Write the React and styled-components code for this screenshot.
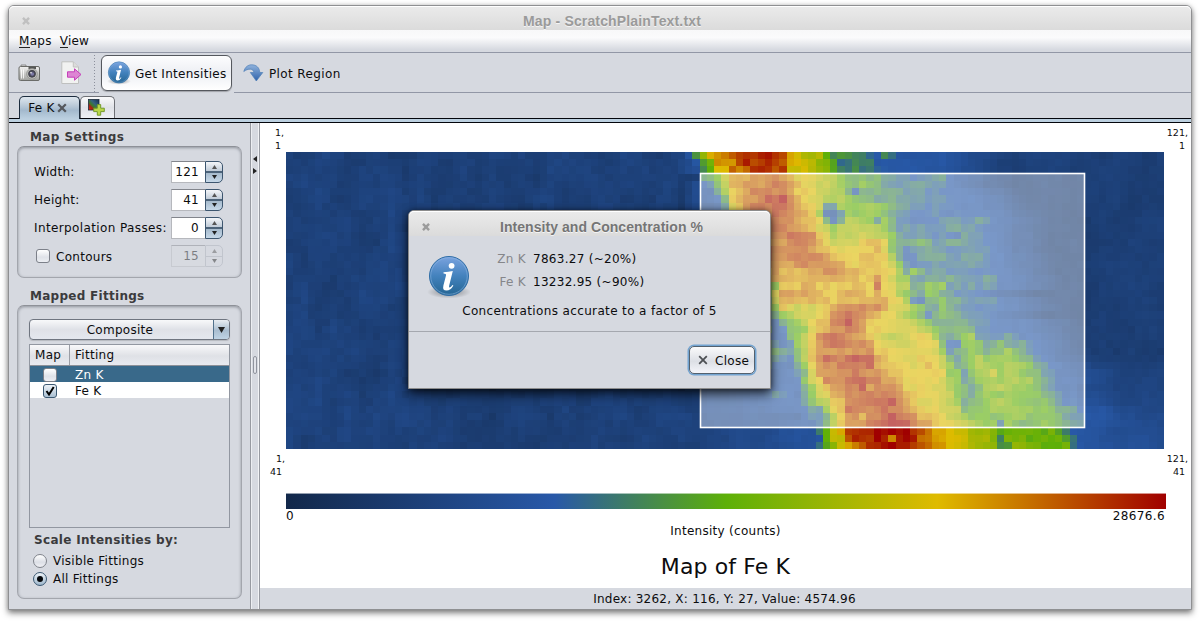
import React from "react";
import styled, { createGlobalStyle, css } from "styled-components";

const GlobalStyle = createGlobalStyle`
  * { box-sizing: border-box; }
  html, body { margin: 0; background: #fff; }
  body { overflow: hidden; font-family: "DejaVu Sans", sans-serif; font-size: 12px; color: #000; }
`;

const Page = styled.div`
  width: 1200px;
  height: 621px;
  padding: 5px 8px 11px;
  overflow: hidden;
`;

const Window = styled.div`
  position: relative;
  display: flex;
  flex-direction: column;
  width: 1184px;
  height: 605px;
  border: 1px solid #8f9092;
  border-radius: 6px 6px 0 0;
  background: #d6d9e0;
  box-shadow: 0 3px 6px rgba(0, 0, 0, 0.5), 0 0 4px rgba(0, 0, 0, 0.15);
`;

const Label = styled.span`
  display: block;
  white-space: pre;
  font-size: ${(p) => p.$size || 12}px;
  line-height: ${(p) => p.$lh || 16}px;
  letter-spacing: ${(p) => (p.$track === undefined ? 0.28 : p.$track)}px;
  padding-top: ${(p) => p.$drop || 0}px;
  color: ${(p) => p.$color || "#0c0c0e"};
  font-weight: ${(p) => (p.$bold ? 700 : 400)};
`;

const TitleBar = styled.div`
  display: grid;
  grid-template-columns: 34px 1fr 10px;
  align-items: center;
  flex: none;
  height: ${(p) => p.$h}px;
  padding-top: 6px;
  border-radius: 5px 5px 0 0;
  background: linear-gradient(#ebebeb, #dbdbdb);
  box-shadow: inset 0 1px 0 #fff;
  svg { justify-self: center; }
`;

const TitleText = styled.div`
  text-align: center;
  font-family: "Liberation Sans", sans-serif;
  font-weight: 700;
  font-size: ${(p) => p.$size}px;
  line-height: 16px;
  color: ${(p) => p.$color};
  text-shadow: 0 1px 0 rgba(255, 255, 255, 0.7);
  white-space: pre;
  letter-spacing: ${(p) => p.$track || 0}px;
`;

const MenuBar = styled.div`
  display: flex;
  gap: 8px;
  flex: none;
  height: 23px;
  padding: 3px 10px 0;
  border-bottom: 1px solid #9297a6;
  background: linear-gradient(#f8f8f9 0%, #fbfbfc 35%, #d6d9e0 90%);
  u { text-decoration: none; border-bottom: 1px solid #222; display: inline-block; height: 15px; }
`;

const Toolbar = styled.div`
  display: flex;
  flex: none;
  align-items: center;
  height: 40px;
  background: linear-gradient(#9297a6, #9297a6) 0 39px / 90px 1px no-repeat,
    linear-gradient(#9297a6, #9297a6) 225px 39px / 960px 1px no-repeat;
`;

const ToolIcon = styled.div`
  display: flex;
  flex: none;
  align-items: center;
  justify-content: center;
  width: ${(p) => p.$w}px;
`;

const ToolSeparator = styled.div`
  width: 1px;
  height: 37px;
  margin-right: 6px;
  background: repeating-linear-gradient(#8c909c 0 1px, transparent 1px 3px);
`;

const ToolButton = styled.div`
  display: flex;
  align-items: center;
  width: ${(p) => p.$w}px;
  height: 36px;
  padding-left: 5px;
  gap: 4px;
  ${(p) =>
    p.$active &&
    css`
      border: 1px solid #55585e;
      border-radius: 6px;
      background: linear-gradient(#fdfdfe, #edeff4 50%, #fff);
      box-shadow: 0 1px 1px rgba(0, 0, 0, 0.25);
    `}
`;

const TabStrip = styled.div`
  display: flex;
  align-items: flex-end;
  flex: none;
  height: 30px;
  padding: 3px 10px 0;
  background: linear-gradient(#04060c, #04060c) 0 25px / 100% 1px no-repeat,
    linear-gradient(#bcd0e0, #bcd0e0) 0 26px / 100% 3px no-repeat,
    linear-gradient(#04060c, #04060c) 0 29px / 100% 1px no-repeat;
`;

const Tab = styled.div`
  display: flex;
  align-items: center;
  justify-content: center;
  gap: 2px;
  width: ${(p) => p.$w}px;
  padding-right: ${(p) => (p.$selected ? 4 : 2)}px;
  height: ${(p) => (p.$selected ? 23 : 22)}px;
  margin-bottom: ${(p) => (p.$selected ? 4 : 5)}px;
  border: 1px solid ${(p) => (p.$selected ? "#1c2c3e" : "#6e7076")};
  border-bottom: 0;
  border-radius: 5px 5px 0 0;
  background: ${(p) =>
    p.$selected
      ? "linear-gradient(#dfe7ee, #b4c5d5 45%, #a3b9cd 60%, #bcd0e0)"
      : "linear-gradient(#fafafb, #e0e2e8 50%, #eef0f5)"};
`;

const Body = styled.div`
  display: flex;
  flex: 1;
  min-height: 0;
`;

const Sidebar = styled.div`
  width: 241px;
  padding: 5px 8px 0;
`;

const SectionTitle = styled.div`
  height: ${(p) => p.$h}px;
  padding: 1px 0 0 13px;
`;

const GroupBox = styled.div`
  height: ${(p) => p.$h}px;
  padding: ${(p) => p.$pad};
  border: 1px solid #a3a6ad;
  border-top-color: #8e9198;
  border-radius: 7px;
  box-shadow: inset 0 1px 3px rgba(40, 44, 54, 0.4);
`;

const SettingRow = styled.div`
  display: flex;
  align-items: center;
  justify-content: space-between;
  height: 22px;
  margin-bottom: 6px;
`;

const SpinBox = styled.div`
  display: flex;
  flex: none;
  width: 52px;
  height: 22px;
  opacity: ${(p) => (p.$disabled ? 0.45 : 1)};
`;

const SpinValue = styled.div`
  width: 34px;
  padding: 2px 6px 0 0;
  display: flex;
  justify-content: flex-end;
  border: 1px solid #b6b8bd;
  border-top-color: #82858c;
  border-right: 0;
  background: ${(p) => (p.$disabled ? "#d9dce2" : "#fff")};
`;

const SpinButtons = styled.div`
  display: grid;
  grid-template-rows: 1fr 1fr;
  justify-items: center;
  align-items: center;
  width: 18px;
  border: 1px solid ${(p) => (p.$disabled ? "#a8adb8" : "#3d566f")};
  border-radius: 0 5px 5px 0;
  background: ${(p) =>
    p.$disabled
      ? "linear-gradient(#d6d9e0 49%, #a8adb8 49% 53%, #d6d9e0 53%)"
      : "linear-gradient(#f4f6f9, #bdc9d6 47%, #4c6379 47% 53%, #a5b9cb 53%, #c6d8e8)"};
`;

const Check = styled.div`
  display: flex;
  align-items: center;
  justify-content: center;
  width: 14px;
  height: 14px;
  border: 1px solid ${(p) => (p.$on ? "#3b5872" : "#7c8089")};
  border-radius: 3px;
  background: ${(p) => (p.$on ? "linear-gradient(#eef3f8, #a9bfd2)" : "linear-gradient(#fff, #dfe2e8 60%, #eceef3)")};
`;

const Inline = styled.div`
  display: flex;
  align-items: center;
  gap: ${(p) => p.$gap}px;
  padding-left: ${(p) => p.$left || 0}px;
  height: ${(p) => p.$h || 22}px;
`;

const Combo = styled.div`
  display: flex;
  height: 21px;
  border: 1px solid #6f7580;
  border-radius: 4px;
  overflow: hidden;
  background: linear-gradient(#f8f9fa, #dfe1e7 50%, #e4e7ee);
  box-shadow: 0 1px 1px rgba(0, 0, 0, 0.15);
`;

const ComboText = styled.div`
  flex: 1;
  display: flex;
  justify-content: center;
  padding: 2px 3px 0 0;
`;

const ComboArrow = styled.div`
  display: flex;
  align-items: center;
  justify-content: center;
  width: 16px;
  border-left: 1px solid #50708c;
  background: linear-gradient(#e8edf2, #a9bdd0 55%, #bfd3e4);
`;

const Table = styled.div`
  height: 184px;
  margin-top: 4px;
  border: 1px solid #9297a1;
`;

const TableHead = styled.div`
  display: grid;
  grid-template-columns: 39px 1fr;
  height: 21px;
  border-bottom: 1px solid #8d9098;
  background: linear-gradient(#f8f8fa, #dfe1e6 55%, #e8eaf0);
  > * { padding: 2px 0 0 5px; }
  > * + * { border-left: 1px solid #9a9da5; }
`;

const TableRow = styled.div`
  display: grid;
  grid-template-columns: 39px 1fr;
  align-items: center;
  height: 16px;
  background: ${(p) => (p.$selected ? "#39698a" : "#fff")};
  > :first-child { justify-self: center; }
  > :last-child { padding-left: 6px; }
`;

const Radio = styled.div`
  display: flex;
  align-items: center;
  justify-content: center;
  width: 14px;
  height: 14px;
  border: 1px solid ${(p) => (p.$on ? "#3b5872" : "#80848c")};
  border-radius: 50%;
  background: ${(p) => (p.$on ? "linear-gradient(#eef3f8, #9fb8cd)" : "linear-gradient(#fff, #dcdfe6 60%, #f0f1f5)")};
  &::after {
    content: "";
    width: 6px;
    height: 6px;
    border-radius: 50%;
    background: ${(p) => (p.$on ? "#05070a" : "transparent")};
  }
`;

const Divider = styled.div`
  display: flex;
  flex-direction: column;
  align-items: center;
  gap: 6px;
  width: 10px;
  border: 1px solid #979aa1;
  border-width: 0 1px;
  box-shadow: inset 1px 0 0 #eceef2, inset -1px 0 0 #f2f3f6;
  padding-top: 33px;
`;

const Grip = styled.div`
  width: 4px;
  height: 18px;
  margin-top: 176px;
  border: 1px solid #90949e;
  border-radius: 2px;
  background: #e2e4ea;
`;

const MapPane = styled.div`
  display: flex;
  flex-direction: column;
  flex: 1;
  background: #fff;
`;

const CornerRow = styled.div`
  display: flex;
  justify-content: space-between;
  height: ${(p) => p.$h}px;
  padding: ${(p) => p.$top}px 3px 0 10px;
`;

const Corner = styled.div`
  display: flex;
  flex-direction: column;
  align-items: flex-end;
  min-width: 14px;
  > :last-child { padding-right: 3px; }
`;

const Heatmap = styled.svg`
  display: block;
  flex: none;
  width: 878px;
  height: 297px;
  margin-left: 26px;
`;

const ScaleBar = styled.div`
  width: 880px;
  height: 16px;
  flex: none;
  margin-left: 26px;
  border-top: 1px solid rgba(255, 255, 255, 0.55);
  background: linear-gradient(90deg, #12284a, #2858a8 30.5%, #5db008 50%, #dfbb00 74%, #a00000) border-box;
`;

const ScaleEnds = styled.div`
  display: flex;
  justify-content: space-between;
  width: 879px;
  height: 14px;
  margin-left: 26px;
`;

const Centered = styled.div`
  display: flex;
  justify-content: center;
  height: ${(p) => p.$h}px;
`;

const Status = styled.div`
  display: flex;
  justify-content: center;
  flex: 1;
  padding: 3px 2px 0 0;
  background: #d6d9e0;
`;

const Dialog = styled.div`
  position: absolute;
  left: 399px;
  top: 204px;
  display: flex;
  flex-direction: column;
  width: 363px;
  height: 179px;
  border: 1px solid #8c8c8c;
  border-radius: 6px 6px 0 0;
  background: #d6d9e0;
  box-shadow: 0 5px 12px rgba(0, 0, 0, 0.75), 0 0 5px rgba(0, 0, 0, 0.4);
`;

const DialogBody = styled.div`
  display: grid;
  grid-template-columns: 79px 1fr;
  height: 67px;
  padding-top: 15px;
`;

const DialogIcon = styled.div`
  padding: 4px 0 0 18px;
`;

const Readings = styled.div`
  display: grid;
  grid-template-columns: 38px 1fr;
  grid-auto-rows: 23px;
  column-gap: 7px;
  > :nth-child(odd) { justify-self: end; }
`;

const DialogFooter = styled.div`
  display: flex;
  justify-content: flex-end;
  flex: 1;
  padding: 14px 15px 0 0;
  border-top: 1px solid #a5a8af;
`;

const CloseButton = styled.div`
  display: flex;
  align-items: center;
  gap: 7px;
  width: 66px;
  height: 28px;
  padding-left: 8px;
  border: 1px solid #53616f;
  border-radius: 5px;
  background: linear-gradient(#fafafb, #dcdfe5 55%, #f4f5fa);
  box-shadow: 0 0 0 1.5px #73a4d1;
`;

/* Map data: one line per row, "column:level" knots on a 0-100 intensity scale. */
const KNOTS = [
  "55:26 56:40 57:62 58:78 60:80 61:87 62:87 63:93 64:88 65:93 67:93 68:85 69:74 71:67 73:64 74:50 75:42 76:47 77:40 79:40 80:35 81:30 82:42 83:35 84:28 90:28",
  "54:18 55:20 56:28 57:42 58:57 59:79 61:80 62:88 63:97 64:87 65:93 67:92 68:83 69:76 70:72 72:67 73:58 74:55 75:46 76:33 77:35 78:42 80:36 81:30 90:28",
  "54:18 56:24 57:38 58:50 59:72 60:77 61:84 62:80 63:87 64:91 65:93 66:93 67:84 68:88 69:72 71:71 72:66 74:60 75:50 76:36 78:40 80:36 82:30 90:27",
  "54:12 56:14 57:38 58:44 59:52 60:65 61:79 62:82 63:79 65:85 67:90 69:80 70:72 72:70 74:64 76:56 77:46 79:48 81:43 82:38 86:33 90:36 91:30 92:27",
  "54:12 57:28 58:33 59:46 60:63 61:78 63:82 65:85 67:90 68:88 70:78 71:73 73:67 74:66 75:62 76:50 78:44 79:50 81:42 84:33 89:36 91:28",
  "54:12 57:25 58:26 59:36 60:55 61:74 62:80 64:87 66:92 68:85 69:80 71:75 73:65 75:60 76:54 77:42 78:28 79:45 80:38 82:42 84:36 90:32 93:28",
  "54:12 57:24 59:30 60:45 61:73 62:80 64:86 66:93 68:97 69:86 71:74 73:70 75:55 76:64 77:50 78:44 80:40 84:37 88:35 91:30 94:28",
  "54:12 57:22 59:24 60:35 61:68 62:78 64:88 66:92 69:90 71:78 73:68 74:37 75:36 76:58 78:48 80:58 82:52 83:42 85:34 90:33 95:28",
  "54:14 58:20 61:60 63:80 66:90 69:90 71:80 72:76 73:60 74:24 75:24 76:37 77:52 79:50 80:57 82:45 84:34 86:30 88:34 91:30 96:28",
  "54:14 59:20 62:60 64:84 66:91 69:88 71:80 73:72 74:40 75:27 76:38 77:62 79:58 80:50 81:40 82:55 84:35 86:30 91:33 95:36 97:28",
  "54:14 60:20 63:60 65:84 68:90 70:86 72:78 73:70 74:66 75:55 77:66 79:62 81:60 82:55 83:45 84:36 86:30 87:35 93:36 97:28",
  "54:14 60:20 63:60 66:88 68:88 70:94 72:85 73:76 74:70 75:58 76:62 78:66 80:64 82:58 83:48 84:36 88:33 92:28 93:38 97:28",
  "54:14 60:20 63:60 66:80 69:87 70:93 72:85 73:78 74:72 75:62 78:66 79:74 81:78 82:70 83:48 84:38 88:44 89:34 93:40 97:28",
  "54:14 60:20 63:60 66:92 68:87 70:90 72:84 73:80 75:72 77:70 79:76 81:78 82:72 83:50 84:38 85:28 86:36 88:42 90:33 94:35 97:28",
  "54:14 60:20 63:60 66:93 68:85 70:90 72:88 74:83 76:76 78:77 80:76 82:76 83:58 84:42 85:28 87:34 89:40 91:34 95:36 98:28",
  "54:14 60:20 63:60 66:85 68:82 70:87 72:88 74:82 75:86 77:74 80:77 82:75 83:68 84:48 85:35 86:28 88:34 92:35 95:36 98:28",
  "54:14 60:20 64:60 66:82 69:78 72:82 74:86 76:82 78:80 80:75 82:75 83:70 84:55 85:38 86:52 88:36 93:34 98:28",
  "54:14 60:20 64:60 66:80 70:80 74:82 77:79 79:76 81:82 82:75 83:68 84:55 85:56 86:40 87:35 89:42 92:36 96:36 99:28",
  "54:14 63:28 66:50 67:52 68:76 71:80 75:76 78:78 80:76 81:90 82:74 83:70 84:58 85:62 86:40 88:50 90:50 91:36 97:34 99:27",
  "54:14 63:28 65:40 66:55 67:68 68:80 69:82 71:85 73:82 74:78 75:75 76:80 79:82 80:78 81:82 82:76 83:72 84:58 85:48 86:42 87:38 88:50 90:42 92:33 95:28",
  "54:14 63:28 66:45 67:68 68:80 73:80 75:76 78:79 82:80 83:76 84:70 85:55 86:35 87:28 88:42 90:46 92:38 94:30 97:36 98:28",
  "54:14 63:28 66:42 67:55 68:75 69:72 70:66 73:70 74:76 76:84 79:88 82:84 83:72 85:66 86:56 87:45 88:38 89:36 90:48 92:36 94:30 97:34 99:28",
  "54:14 63:28 66:36 67:38 68:52 69:60 71:66 73:70 74:74 75:84 77:96 79:88 80:84 81:78 82:73 84:68 85:58 86:52 87:42 88:33 90:50 91:42 93:33 97:28",
  "57:20 63:28 66:34 67:28 68:38 69:50 71:62 72:75 74:78 75:87 77:96 79:82 80:78 82:72 84:70 86:65 88:50 89:38 90:42 92:40 94:35 97:28 101:28",
  "57:20 63:28 66:40 67:28 68:30 69:45 71:50 72:72 73:78 75:87 77:90 79:82 80:76 83:72 86:70 87:64 88:56 89:46 91:42 93:44 95:35 97:28 101:28",
  "57:20 63:28 66:32 67:28 68:30 69:45 70:52 71:60 72:76 73:87 75:92 77:87 80:78 82:68 83:63 85:70 87:72 88:70 89:55 90:42 91:35 93:54 94:54 95:35 97:33 99:35 102:28",
  "57:20 63:28 66:36 68:28 69:36 70:50 71:62 72:76 73:85 75:90 77:92 80:84 82:70 84:66 86:70 88:74 89:68 90:46 91:28 92:28 93:50 95:48 96:40 98:45 99:36 100:38 101:40 102:30",
  "57:20 66:36 67:40 69:36 70:48 71:60 72:74 73:86 75:84 78:84 80:86 81:78 83:72 86:68 88:74 89:70 90:52 91:33 92:38 94:52 95:50 96:42 98:44 99:54 100:48 101:38 103:28",
  "57:20 66:38 69:28 70:42 71:60 72:76 74:92 76:90 78:94 80:92 82:80 84:72 86:70 88:76 90:66 91:44 92:38 93:48 95:58 96:50 99:55 101:45 103:35 104:28",
  "57:20 66:34 69:26 70:36 71:50 72:75 74:84 76:92 78:88 80:94 81:82 83:76 85:72 87:70 88:78 89:74 90:66 91:55 92:40 93:42 95:60 97:52 99:56 102:52 103:38 104:33",
  "57:20 65:28 69:28 70:36 71:46 72:68 73:82 75:86 78:92 80:85 83:79 85:72 88:74 90:72 91:52 92:48 93:36 95:55 97:65 98:52 100:60 101:52 103:44 104:36 106:28",
  "57:20 65:28 70:28 71:45 72:65 73:76 74:90 76:85 78:94 80:90 82:85 84:80 85:74 87:72 89:76 90:70 91:58 92:48 93:35 94:45 96:58 98:52 99:60 102:55 104:40 106:30",
  "57:20 65:28 70:28 71:42 72:55 73:70 74:79 75:84 77:88 79:94 80:84 83:88 84:80 85:72 88:72 90:70 91:60 92:46 94:38 96:56 98:62 100:52 103:48 104:40 106:28",
  "57:20 65:28 67:35 70:27 71:40 72:50 73:65 74:72 75:80 77:86 80:88 83:92 85:80 86:74 89:72 91:66 92:50 94:40 96:55 98:48 100:54 103:48 105:38 107:28",
  "57:20 65:26 70:28 71:35 72:45 73:55 74:62 75:74 77:84 80:90 82:92 83:97 84:88 86:78 87:72 90:70 92:56 93:42 95:48 97:56 98:64 100:52 104:48 106:36 107:30",
  "57:20 65:24 71:28 72:34 73:38 74:52 75:70 76:80 77:92 79:85 81:92 84:88 86:82 87:76 90:70 92:62 93:46 96:50 98:58 101:52 104:50 106:42 108:36 109:30",
  "57:20 65:22 70:22 73:34 74:42 75:58 76:76 78:85 79:80 81:90 83:96 85:92 87:78 89:75 92:64 94:50 97:46 99:54 103:48 105:50 107:40 109:30",
  "57:20 65:22 72:26 73:34 74:45 75:60 76:78 78:86 80:88 82:95 85:94 87:84 89:76 91:74 93:66 95:56 97:50 98:36 99:52 101:42 104:52 106:48 108:40 110:28",
  "57:17 62:20 72:25 73:36 74:48 75:68 76:76 77:88 79:96 80:92 81:98 83:100 84:96 86:94 87:86 88:80 90:74 93:72 94:64 96:60 98:50 100:56 103:50 104:46 105:54 106:48 107:36 109:28",
  "57:17 62:20 72:25 73:30 74:54 75:70 76:70 77:90 79:93 80:92 81:98 82:96 83:82 84:98 86:92 88:80 90:74 93:70 95:64 97:60 98:42 99:56 103:50 106:54 107:48 108:36 109:28",
  "57:17 62:20 72:25 73:34 74:50 75:60 76:70 77:78 78:84 80:92 82:94 83:100 84:94 86:88 88:80 89:78 91:74 93:70 95:64 97:56 98:44 99:46 100:58 104:50 107:52 108:38 109:28",
].map((line) => line.split(" ").map((k) => k.split(":").map(Number)));

const RAMP = [
  [0, 18, 40, 74],
  [30, 40, 89, 168],
  [50, 93, 176, 8],
  [74, 223, 187, 0],
  [100, 160, 0, 0],
];

const hash = (x, y) => {
  let h = Math.imul(x + 11, 374761393) + Math.imul(y + 7, 668265263);
  h = Math.imul(h ^ (h >>> 13), 1274126177);
  h = Math.imul(h ^ (h >>> 15), 2246822519);
  return (((h ^ (h >>> 16)) >>> 0) / 4294967295) * 2 - 1;
};

const smooth = (x, y, sx, sy, seed) => {
  const gx = Math.floor(x / sx);
  const gy = Math.floor(y / sy);
  const fx = x / sx - gx;
  const fy = y / sy - gy;
  const top = hash(gx + seed, gy) * (1 - fx) + hash(gx + 1 + seed, gy) * fx;
  const bottom = hash(gx + seed, gy + 1) * (1 - fx) + hash(gx + 1 + seed, gy + 1) * fx;
  return top * (1 - fy) + bottom * fy;
};

const levelAt = (col, row) => {
  const knots = KNOTS[row];
  const first = knots[0];
  const last = knots[knots.length - 1];
  const quiet = smooth(col, row, 2, 3, 50) * 3 + smooth(col, row, 8, 9, 90) * 1.5 + hash(col, row) * 1.6;
  if (col < first[0]) return 15 + quiet;
  if (col > last[0]) {
    const floor = row > 28 ? 14.5 + (row - 28) * 0.75 : 14;
    const fade = Math.max(0, 1 - (col - last[0]) / 8);
    return floor + (last[1] - floor) * fade + quiet * 0.7;
  }
  let i = 0;
  while (i < knots.length - 2 && knots[i + 1][0] <= col) i += 1;
  const [c0, v0] = knots[i];
  const [c1, v1] = knots[i + 1];
  const v = v0 + ((v1 - v0) * (col - c0)) / (c1 - c0);
  if (v < 30) return v + quiet * 0.6;
  return v + (v > 79 ? 1.8 : 0) + hash(col, row) * 3.5;
};

const rampColor = (level) => {
  const v = Math.max(0, Math.min(100, level));
  let i = 0;
  while (i < RAMP.length - 2 && RAMP[i + 1][0] < v) i += 1;
  const a = RAMP[i];
  const b = RAMP[i + 1];
  const t = (v - a[0]) / (b[0] - a[0]);
  return `rgb(${[1, 2, 3].map((k) => Math.round(a[k] + (b[k] - a[k]) * t)).join(",")})`;
};

const COLS = 121;
const ROWS = 41;

function IntensityMap() {
  const cells = [];
  for (let row = 0; row < ROWS; row += 1) {
    const y0 = Math.round((row * 297) / ROWS);
    const y1 = Math.round(((row + 1) * 297) / ROWS);
    for (let col = 0; col < COLS; col += 1) {
      const x0 = Math.round((col * 878) / COLS);
      const x1 = Math.round(((col + 1) * 878) / COLS);
      cells.push(<rect key={`${col}-${row}`} x={x0} y={y0} width={x1 - x0} height={y1 - y0} fill={rampColor(levelAt(col, row))} />);
    }
  }
  return (
    <Heatmap viewBox="0 0 878 297" shapeRendering="crispEdges">
      {cells}
      <rect x="414" y="21" width="385" height="255" fill="#fff" fillOpacity=".38" />
      <rect x="414.5" y="21.5" width="384" height="254" fill="none" stroke="#fff" strokeWidth="1.6" shapeRendering="auto" />
    </Heatmap>
  );
}

const Cross = ({ size, color, width = 2.6 }) => (
  <svg width={size} height={size} viewBox="0 0 10 10">
    <path d="M1.2 1.2l7.6 7.6M8.8 1.2L1.2 8.8" stroke={color} strokeWidth={width} fill="none" />
  </svg>
);

const Arrow = ({ dir, w = 5, h = 4, color = "#222" }) => {
  const d = { up: "M0 6L3 0l3 6z", down: "M0 0h6L3 6z", left: "M6 0v6L0 3z", right: "M0 0v6l6-3z" }[dir];
  return (
    <svg width={w} height={h} viewBox="0 0 6 6" preserveAspectRatio="none" display="block">
      <path d={d} fill={color} />
    </svg>
  );
};

const InfoIcon = ({ size, id }) => (
  <svg width={size} height={size} viewBox="0 0 44 44" display="block">
    <defs>
      <linearGradient id={id} x1="0" y1="0" x2="0" y2="1">
        <stop offset="0" stopColor="#7ba3df" />
        <stop offset=".5" stopColor="#4382bd" />
        <stop offset="1" stopColor="#256593" />
      </linearGradient>
      <radialGradient id={`${id}-shade`}>
        <stop offset="0" stopOpacity=".4" />
        <stop offset="1" stopOpacity="0" />
      </radialGradient>
    </defs>
    <ellipse cx="22" cy="37" rx="22" ry="6.5" fill={`url(#${id}-shade)`} />
    <circle cx="22" cy="21" r="19.5" fill={`url(#${id})`} stroke="#2f6da6" />
    <circle cx="22" cy="21" r="18.3" fill="none" stroke="#8db7e2" strokeOpacity=".55" />
    <circle cx="24.6" cy="10.8" r="2.9" fill="#fff" />
    <path d="M16.500 17.200q5-.3 9.300-1.300L22.200 30.500q-.5 2.300.5 2 1.300-.4 2.700-2.600l1 .7q-2.700 5-6.900 5-4.300 0-3.100-5.200L19 20.500q.4-2-2.500-1.900z" fill="#fff" />
  </svg>
);

const CameraIcon = () => (
  <svg width="23" height="18" viewBox="0 0 23 18">
    <defs>
      <linearGradient id="cam" x1="0" y1="0" x2="0" y2="1">
        <stop offset="0" stopColor="#f2f2f1" />
        <stop offset="1" stopColor="#9fa09d" />
      </linearGradient>
    </defs>
    <path d="M3 3V1h5v2" fill="#ddd" stroke="#777" strokeWidth=".8" />
    <rect x="1" y="2.500" width="20.500" height="14" rx="1.500" fill="url(#cam)" stroke="#6b6c69" />
    <rect x="10.500" y="2.500" width="7.500" height="2.500" fill="#555654" />
    <path d="M3.500 5.500v9M5.500 5.500v9" stroke="#fff" strokeOpacity=".8" />
    <circle cx="14" cy="9.800" r="5.300" fill="#c4c5c2" stroke="#8b8c89" strokeWidth=".8" />
    <circle cx="14" cy="9.800" r="3.500" fill="#4b4a5c" stroke="#3a3a40" strokeWidth=".8" />
    <circle cx="14.300" cy="10" r="1.800" fill="#7c7aa6" />
    <circle cx="13" cy="8.800" r=".8" fill="#fff" />
  </svg>
);

const ExportIcon = () => (
  <svg width="22" height="24" viewBox="0 0 22 24">
    <path d="M.8.8h11.500l5.200 5.200v16.500H.8z" fill="#f1f2f1" stroke="#bfc0bf" />
    <path d="M12.300.8V6h5.200" fill="#dcdcdb" stroke="#c3c4c2" />
    <path d="M6.500 10.800h7V7.800l6.500 5.700-6.500 5.700v-3H6.500z" fill="#dd86d3" stroke="#c63fba" strokeLinejoin="round" />
  </svg>
);

const PlotIcon = () => (
  <svg width="21" height="18" viewBox="0 0 21 18">
    <defs>
      <linearGradient id="plot" x1="0" y1="0" x2="0" y2="1">
        <stop offset="0" stopColor="#8fb2dc" />
        <stop offset="1" stopColor="#2f62aa" />
      </linearGradient>
    </defs>
    <path d="M.8 7.500C2 3 5 .8 8.600.8c4.800 0 7.900 2.800 8.200 7.700h3l-6.500 8.500-6-8.500h3.600C10.600 6.500 9.500 5.300 7.400 5.200 5 5.100 3 5.800.8 7.500z" fill="url(#plot)" stroke="#4f7fb8" strokeWidth=".7" />
  </svg>
);

const AddMapIcon = () => (
  <svg width="17" height="17" viewBox="0 0 17 17">
    <defs>
      <linearGradient id="tile" x1="0" y1="1" x2="1" y2="0">
        <stop offset="0" stopColor="#e02b12" />
        <stop offset=".25" stopColor="#a82014" />
        <stop offset=".4" stopColor="#3c7a2c" />
        <stop offset=".6" stopColor="#35617e" />
        <stop offset="1" stopColor="#122c50" />
      </linearGradient>
    </defs>
    <rect x=".5" y=".5" width="10.500" height="10.500" fill="url(#tile)" stroke="#1c2c3c" strokeWidth=".8" />
    <path d="M9.300 5.600h3.400v3.600h3.600v3.400h-3.600v3.600H9.300v-3.600H5.700V9.200h3.600z" fill="#b9d64a" stroke="#6b9420" strokeWidth=".9" />
  </svg>
);

const Spinner = ({ value, disabled }) => (
  <SpinBox $disabled={disabled}>
    <SpinValue $disabled={disabled}><Label $lh={17}>{value}</Label></SpinValue>
    <SpinButtons $disabled={disabled}>
      <Arrow dir="up" color="#555" />
      <Arrow dir="down" />
    </SpinButtons>
  </SpinBox>
);

const CornerLabels = ({ column, row }) => (
  <Corner>
    <Label $size={9.5} $lh={13} $track={0}>{column},</Label>
    <Label $size={9.5} $lh={13} $track={0}>{row}</Label>
  </Corner>
);

export default function App() {
  return (
    <Page>
      <GlobalStyle />
      <Window>
        <TitleBar $h={24}>
          <Cross size={8} color="#c0c0c0" width={3} />
          <TitleText $size={14} $track={0.15} $color="#9a9a9a">Map - ScratchPlainText.txt</TitleText>
        </TitleBar>
        <MenuBar>
          <Label><u>M</u>aps</Label>
          <Label $track={0.1}><u>V</u>iew</Label>
        </MenuBar>
        <Toolbar>
          <ToolIcon $w={40}><CameraIcon /></ToolIcon>
          <ToolIcon $w={45}><ExportIcon /></ToolIcon>
          <ToolSeparator />
          <ToolButton $w={131} $active>
            <InfoIcon size={24} id="info-small" />
            <Label $drop={1}>Get Intensities</Label>
          </ToolButton>
          <ToolButton $w={120}>
            <Inline $gap={5} $left={6}>
              <PlotIcon />
              <Label $drop={1} $track={0.38}>Plot Region</Label>
            </Inline>
          </ToolButton>
        </Toolbar>
        <TabStrip>
          <Tab $w={61} $selected>
            <Label>Fe K</Label>
            <Cross size={10} color="#54575c" width={2.2} />
          </Tab>
          <Tab $w={35}><AddMapIcon /></Tab>
        </TabStrip>
        <Body>
          <Sidebar>
            <SectionTitle $h={18}><Label $bold $track={0.4} $color="#3b3b3d">Map Settings</Label></SectionTitle>
            <GroupBox $h={132} $pad="14px 18px 0 16px">
              <SettingRow><Label>Width:</Label><Spinner value="121" /></SettingRow>
              <SettingRow><Label>Height:</Label><Spinner value="41" /></SettingRow>
              <SettingRow><Label $track={0.38}>Interpolation Passes:</Label><Spinner value="0" /></SettingRow>
              <SettingRow>
                <Inline $gap={6} $left={2}><Check /><Label $drop={1}>Contours</Label></Inline>
                <Spinner value="15" disabled />
              </SettingRow>
            </GroupBox>
            <SectionTitle $h={27}><Label $bold $lh={34} $color="#3b3b3d">Mapped Fittings</Label></SectionTitle>
            <GroupBox $h={294} $pad="13px 11px 0 11px">
              <Combo>
                <ComboText><Label>Composite</Label></ComboText>
                <ComboArrow><Arrow dir="down" w={7} h={6} /></ComboArrow>
              </Combo>
              <Table>
                <TableHead><Label>Map</Label><Label>Fitting</Label></TableHead>
                <TableRow $selected><Check /><Label $drop={1} $color="#fff">Zn K</Label></TableRow>
                <TableRow>
                  <Check $on>
                    <svg width="10" height="10" viewBox="0 0 10 10"><path d="M1.500 5l2.500 3.500L8.700 1" fill="none" stroke="#000" strokeWidth="2" /></svg>
                  </Check>
                  <Label $drop={1}>Fe K</Label>
                </TableRow>
              </Table>
              <Inline $left={5} $h={24}><Label $bold $track={0.32} $color="#3b3b3d">Scale Intensities by:</Label></Inline>
              <Inline $gap={6} $left={4} $h={18}><Radio /><Label>Visible Fittings</Label></Inline>
              <Inline $gap={6} $left={4} $h={18}><Radio $on /><Label>All Fittings</Label></Inline>
            </GroupBox>
          </Sidebar>
          <Divider>
            <Arrow dir="left" w={4} h={6} />
            <Arrow dir="right" w={4} h={6} />
            <Grip />
          </Divider>
          <MapPane>
            <CornerRow $h={29} $top={3}>
              <CornerLabels column="1" row="1" />
              <CornerLabels column="121" row="1" />
            </CornerRow>
            <IntensityMap />
            <CornerRow $h={44} $top={3}>
              <CornerLabels column="1" row="41" />
              <CornerLabels column="121" row="41" />
            </CornerRow>
            <ScaleBar />
            <ScaleEnds><Label $lh={14}>0</Label><Label $lh={14} $track={0.38}>28676.6</Label></ScaleEnds>
            <Centered $h={31}><Label>Intensity (counts)</Label></Centered>
            <Centered $h={34}><Label $size={22} $lh={25} $track={0.12}>Map of Fe K</Label></Centered>
            <Status><Label $track={0.24}>Index: 3262, X: 116, Y: 27, Value: 4574.96</Label></Status>
          </MapPane>
        </Body>
        <Dialog>
          <TitleBar $h={25}>
            <Cross size={8} color="#9c9c9c" width={3} />
            <TitleText $size={14} $track={0.05} $color="#757575">Intensity and Concentration %</TitleText>
          </TitleBar>
          <DialogBody>
            <DialogIcon><InfoIcon size={44} id="info-large" /></DialogIcon>
            <Readings>
              <Label $color="#85868a">Zn K</Label><Label>7863.27 (~20%)</Label>
              <Label $color="#85868a">Fe K</Label><Label>13232.95 (~90%)</Label>
            </Readings>
          </DialogBody>
          <Centered $h={28}><Label $track={0.36}>Concentrations accurate to a factor of 5</Label></Centered>
          <DialogFooter>
            <CloseButton><Cross size={10} color="#4d5054" width={1.8} /><Label $drop={1}>Close</Label></CloseButton>
          </DialogFooter>
        </Dialog>
      </Window>
    </Page>
  );
}
